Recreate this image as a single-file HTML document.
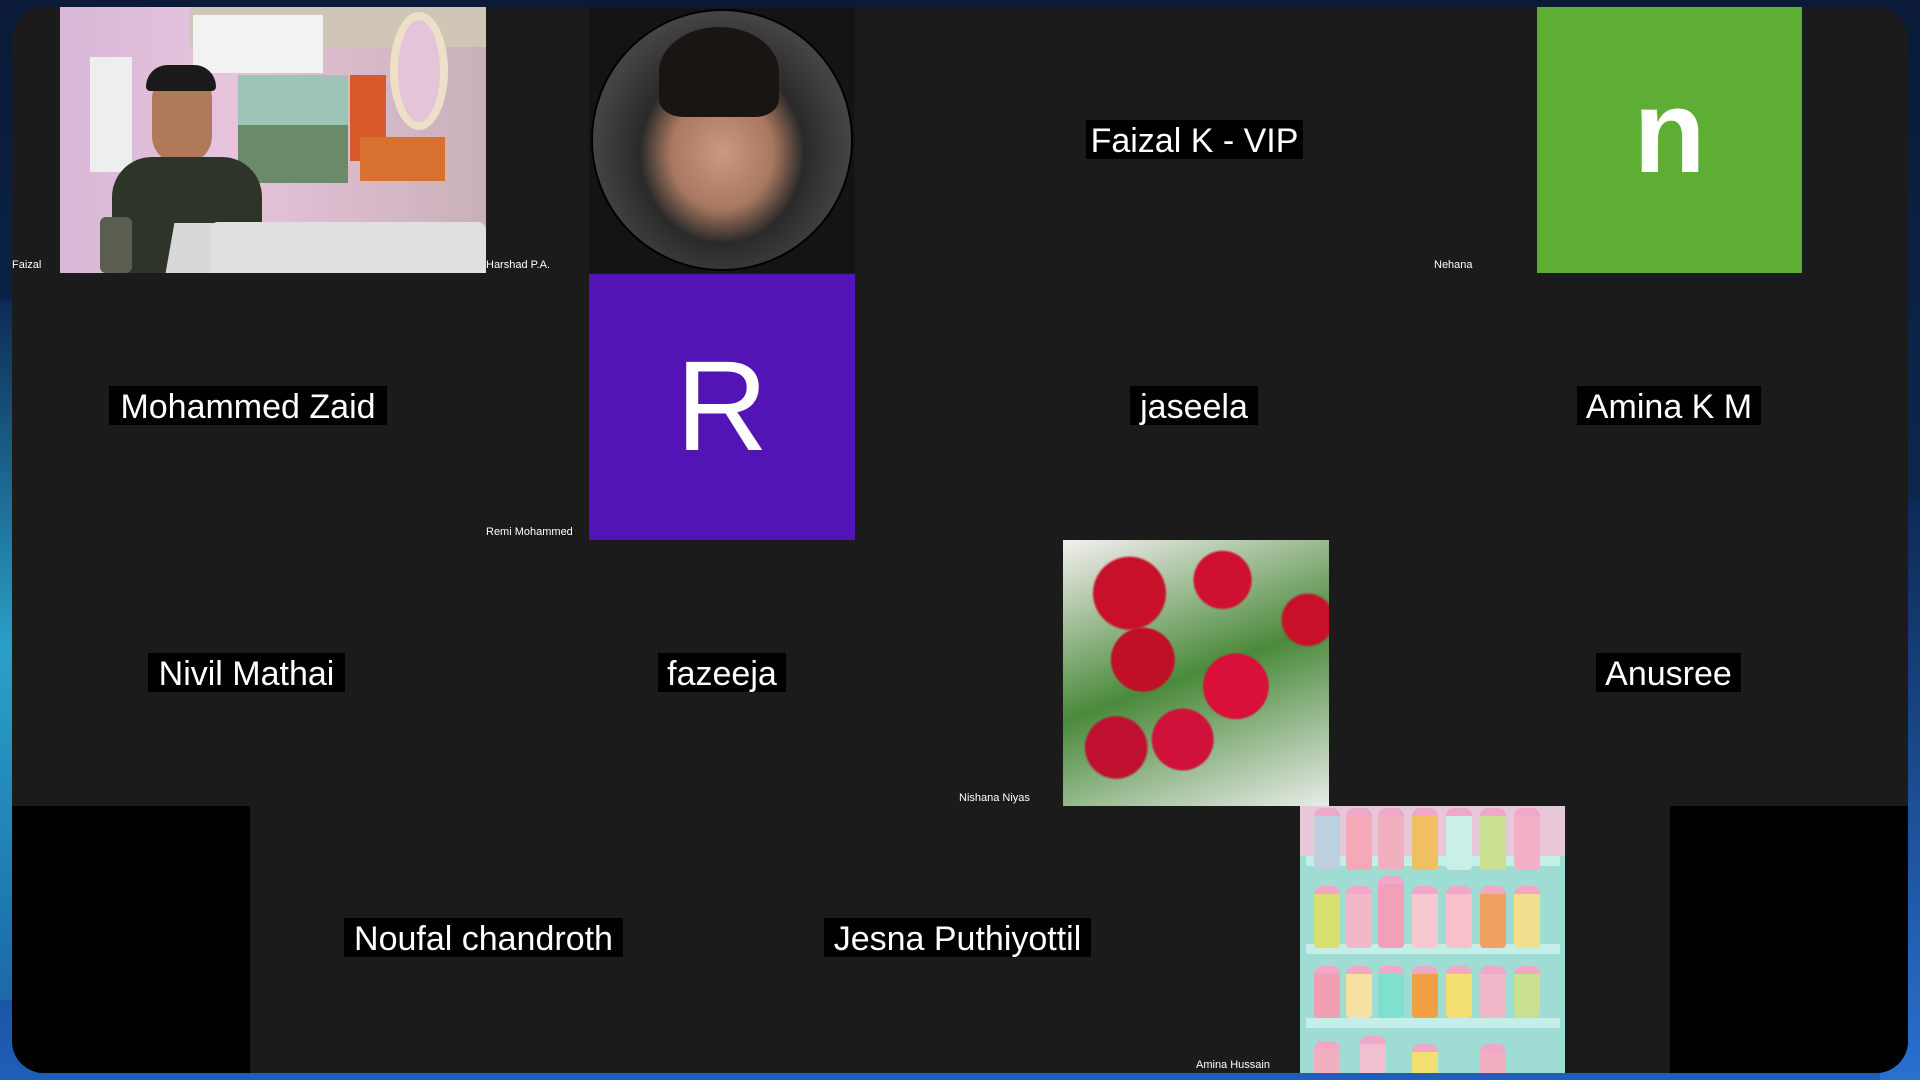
<!DOCTYPE html>
<html><head><meta charset="utf-8"><style>
*{margin:0;padding:0;box-sizing:border-box}
body{width:1920px;height:1080px;overflow:hidden;background:linear-gradient(180deg,#0a1a38 0%,#0d2a55 60%,#1f5fb8 100%);font-family:"Liberation Sans",sans-serif;position:relative}
.glow{position:absolute;left:0;top:300px;width:60px;height:700px;background:linear-gradient(180deg,#0d2a55,#2aa0c8,#1a6aa8);}
.glowr{position:absolute;right:0;top:500px;width:40px;height:580px;background:linear-gradient(180deg,#0d2a55,#2a70d0);}
.panel{position:absolute;left:12px;top:7px;width:1896px;height:1066px;background:#1b1b1b;border-radius:32px;overflow:hidden}
.a{position:absolute}
.nm{position:absolute;background:#000;color:#fff;font-size:34px;height:39px;line-height:43px;text-align:center;white-space:nowrap}
.sl{position:absolute;color:#fff;font-size:11px;white-space:nowrap}
.jar{position:absolute;width:26px;height:62px;border-radius:8px 8px 4px 4px;border-top:8px solid #f0a8c8}
</style></head><body>
<div class="glow"></div><div class="glowr"></div>
<div class="panel">
<div class="a" style="left:48px;top:0;width:426px;height:266px;background:linear-gradient(90deg,#d8b8d8 0%,#e6c4dc 40%,#c9b0b8 100%);overflow:hidden">
 <div class="a" style="left:130px;top:0;width:296px;height:40px;background:#d0c6b8"></div>
 <div class="a" style="left:133px;top:8px;width:130px;height:58px;background:#f2f2f2"></div>
 <div class="a" style="left:30px;top:50px;width:42px;height:115px;background:#eee"></div>
 <div class="a" style="left:178px;top:68px;width:110px;height:50px;background:#9ec4b8"></div>
 <div class="a" style="left:178px;top:118px;width:110px;height:58px;background:#6a8a6a"></div>
 <div class="a" style="left:290px;top:68px;width:36px;height:86px;background:#d85a2a"></div>
 <div class="a" style="left:330px;top:5px;width:58px;height:118px;border:8px solid #eee0c8;border-radius:50%;background:#e4c4d8"></div>
 <div class="a" style="left:300px;top:130px;width:85px;height:44px;background:#d87030"></div>
 <div class="a" style="left:92px;top:62px;width:60px;height:95px;background:#b07a5a;border-radius:30px 30px 28px 28px"></div>
 <div class="a" style="left:86px;top:58px;width:70px;height:26px;background:#1a1a1a;border-radius:30px 30px 6px 6px"></div>
 <div class="a" style="left:52px;top:150px;width:150px;height:116px;background:#2e3428;border-radius:40px 40px 0 0"></div>
 <div class="a" style="left:110px;top:216px;width:140px;height:50px;background:#d8d8d8;transform:skewX(-10deg)"></div>
 <div class="a" style="left:150px;top:215px;width:276px;height:51px;background:#e0e0e0;border-radius:8px 8px 0 0"></div>
 <div class="a" style="left:40px;top:210px;width:32px;height:56px;background:#5a5e50;border-radius:6px"></div>
</div>
<div class="sl" style="left:0;top:252px">Faizal</div>
<div class="a" style="left:577px;top:0;width:266px;height:266px;background:#141414">
 <div class="a" style="left:2px;top:2px;width:262px;height:262px;border-radius:50%;background:radial-gradient(ellipse at 50% 55%,#c89a80 0%,#a87860 28%,#2a2a2a 45%,#444 70%,#555 100%);border:2px solid #000"></div>
 <div class="a" style="left:70px;top:20px;width:120px;height:90px;border-radius:50% 50% 20% 20%;background:#1a1412"></div>
</div>
<div class="sl" style="left:474px;top:252px">Harshad P.A.</div>
<div class="nm" style="left:1074px;top:113px;width:217px">Faizal K - VIP</div>
<div class="a" style="left:1525px;top:0;width:265px;height:266px;background:#5ead35;color:#fff;font-size:118px;font-weight:bold;text-align:center;line-height:250px">n</div>
<div class="sl" style="left:1422px;top:252px">Nehana</div>
<div class="nm" style="left:97px;top:379px;width:278px">Mohammed Zaid</div>
<div class="a" style="left:577px;top:267px;width:266px;height:266px;background:#5214b4;color:#fff;font-size:128px;text-align:center;line-height:266px">R</div>
<div class="sl" style="left:474px;top:519px">Remi Mohammed</div>
<div class="nm" style="left:1118px;top:379px;width:128px">jaseela</div>
<div class="nm" style="left:1565px;top:379px;width:184px">Amina K M</div>
<div class="nm" style="left:136px;top:646px;width:197px">Nivil Mathai</div>
<div class="nm" style="left:646px;top:646px;width:128px">fazeeja</div>
<div class="a" style="left:1051px;top:533px;width:266px;height:266px;background:radial-gradient(circle at 25% 20%,#c8102a 0 12%,transparent 13%),radial-gradient(circle at 60% 15%,#d01030 0 10%,transparent 11%),radial-gradient(circle at 30% 45%,#c01028 0 13%,transparent 14%),radial-gradient(circle at 65% 55%,#d8103a 0 14%,transparent 15%),radial-gradient(circle at 45% 75%,#d0123a 0 12%,transparent 13%),radial-gradient(circle at 20% 78%,#c01030 0 10%,transparent 11%),radial-gradient(circle at 92% 30%,#c8102a 0 8%,transparent 9%),linear-gradient(160deg,#f4f0f0 0%,#4a8a3a 50%,#e8ece8 100%)"></div>
<div class="sl" style="left:947px;top:785px">Nishana Niyas</div>
<div class="nm" style="left:1584px;top:646px;width:145px">Anusree</div>
<div class="a" style="left:0;top:799px;width:238px;height:267px;background:#000"></div>
<div class="nm" style="left:332px;top:911px;width:279px">Noufal chandroth</div>
<div class="nm" style="left:812px;top:911px;width:267px">Jesna Puthiyottil</div>
<div class="a" style="left:1288px;top:799px;width:265px;height:267px;background:#9fdcd4;overflow:hidden">
 <div class="a" style="left:0;top:0;width:265px;height:50px;background:#e8c8d8"></div>
 <div class="a" style="left:6px;top:50px;width:254px;height:10px;background:#c4eee8"></div>
 <div class="a" style="left:6px;top:138px;width:254px;height:10px;background:#c4eee8"></div>
 <div class="a" style="left:6px;top:212px;width:254px;height:10px;background:#c4eee8"></div>
 <div class="jar" style="left:14px;top:2px;background:#bcd0e0"></div><div class="jar" style="left:46px;top:2px;background:#f4a8b8"></div><div class="jar" style="left:78px;top:2px;background:#f0b0c0"></div><div class="jar" style="left:112px;top:2px;background:#f0c060"></div><div class="jar" style="left:146px;top:2px;background:#c8f0e8"></div><div class="jar" style="left:180px;top:2px;background:#c8e090"></div><div class="jar" style="left:214px;top:2px;background:#f4b0c8"></div>
 <div class="jar" style="left:14px;top:80px;background:#d8e070"></div><div class="jar" style="left:46px;top:80px;background:#f0b8c8"></div><div class="jar" style="left:78px;top:70px;height:72px;background:#f0a0b8"></div><div class="jar" style="left:112px;top:80px;background:#f8c8d0"></div><div class="jar" style="left:146px;top:80px;background:#f8c0c8"></div><div class="jar" style="left:180px;top:80px;background:#f0a060"></div><div class="jar" style="left:214px;top:80px;background:#f0e090"></div>
 <div class="jar" style="left:14px;top:160px;height:52px;background:#f0a0b0"></div><div class="jar" style="left:46px;top:160px;height:52px;background:#f4e0a0"></div><div class="jar" style="left:78px;top:160px;height:52px;background:#80e0d0"></div><div class="jar" style="left:112px;top:160px;height:52px;background:#f0a040"></div><div class="jar" style="left:146px;top:160px;height:52px;background:#f4e070"></div><div class="jar" style="left:180px;top:160px;height:52px;background:#f0b8c8"></div><div class="jar" style="left:214px;top:160px;height:52px;background:#c8e090"></div>
 <div class="jar" style="left:14px;top:235px;background:#f0b0c0"></div><div class="jar" style="left:60px;top:230px;background:#f0c0d0"></div><div class="jar" style="left:112px;top:238px;background:#f4e070"></div><div class="jar" style="left:180px;top:238px;background:#f0b0c0"></div>
</div>
<div class="sl" style="left:1184px;top:1052px">Amina Hussain</div>
<div class="a" style="left:1658px;top:799px;width:238px;height:267px;background:#000"></div>
</div>
</body></html>
